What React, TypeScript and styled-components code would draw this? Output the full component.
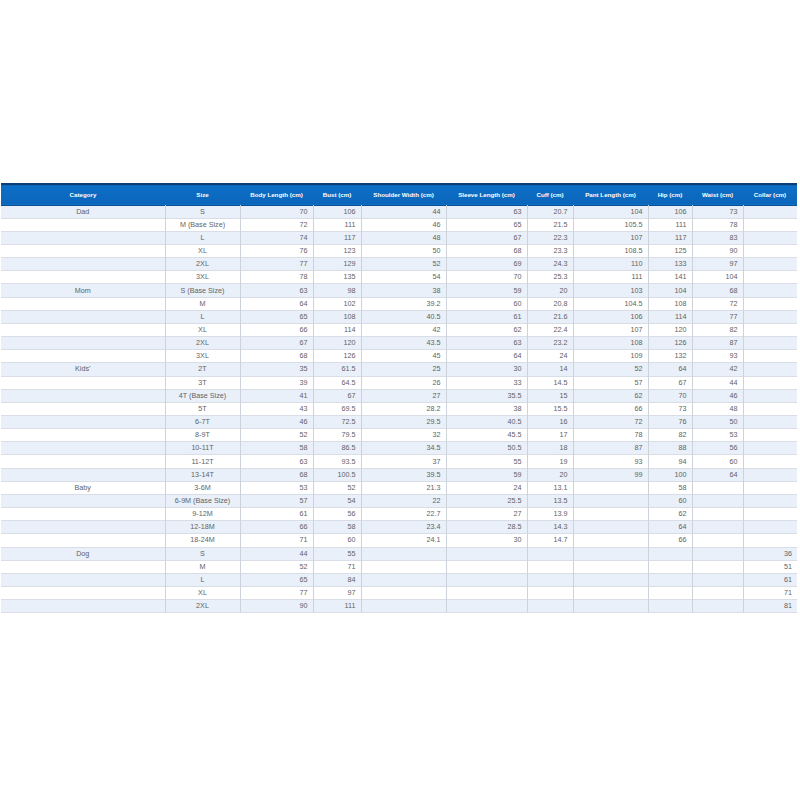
import React from "react";
import styled, { createGlobalStyle } from "styled-components";

const GlobalStyle = createGlobalStyle`
  html, body { margin: 0; padding: 0; background: #ffffff; }
  body { font-family: "Liberation Sans", Arial, sans-serif; }
`;

const Page = styled.div`
  width: 800px;
  height: 800px;
  box-sizing: border-box;
  padding: 183px 3px 0 1px;
`;

const Table = styled.table`
  width: 796px;
  border-collapse: collapse;
  table-layout: fixed;
  font-family: "Liberation Sans", Arial, sans-serif;
`;

const HeadRow = styled.tr`
  height: 21px;
  background: linear-gradient(#0d6fc6, #0a66bb);
  border-top: 2px solid #0d3f75;
  border-bottom: 1px solid #0b4f92;
`;

const HeadCell = styled.th`
  color: #ffffff;
  font-size: 6.2px;
  font-weight: bold;
  text-align: center;
  padding: 0 2px;
  white-space: nowrap;
  overflow: hidden;
`;

const Row = styled.tr<{ $striped: boolean }>`
  height: 13.16px;
  background: ${(p) => (p.$striped ? "#e9f0f9" : "#ffffff")};
  border-bottom: 1px solid #d9dee6;
`;

const Cell = styled.td<{ $align: "center" | "right"; $first?: boolean }>`
  font-size: 7.2px;
  color: #5f6266;
  text-align: ${(p) => p.$align};
  padding: 0 ${(p) => (p.$align === "right" ? "5px" : "2px")} 0 2px;
  border-left: ${(p) => (p.$first ? "none" : "1px solid #cdd3db")};
  white-space: nowrap;
  overflow: hidden;
  line-height: 12px;
  vertical-align: middle;
`;

const widths = [164, 75, 73, 48, 85, 81, 46, 75, 44, 51, 54];
const headers = [
  "Category",
  "Size",
  "Body Length (cm)",
  "Bust (cm)",
  "Shoulder Width (cm)",
  "Sleeve Length (cm)",
  "Cuff (cm)",
  "Pant Length (cm)",
  "Hip (cm)",
  "Waist (cm)",
  "Collar (cm)",
];

type R = string[];
const rows: R[] = [
  ["Dad", "S", "70", "106", "44", "63", "20.7", "104", "106", "73", ""],
  ["", "M (Base Size)", "72", "111", "46", "65", "21.5", "105.5", "111", "78", ""],
  ["", "L", "74", "117", "48", "67", "22.3", "107", "117", "83", ""],
  ["", "XL", "76", "123", "50", "68", "23.3", "108.5", "125", "90", ""],
  ["", "2XL", "77", "129", "52", "69", "24.3", "110", "133", "97", ""],
  ["", "3XL", "78", "135", "54", "70", "25.3", "111", "141", "104", ""],
  ["Mom", "S (Base Size)", "63", "98", "38", "59", "20", "103", "104", "68", ""],
  ["", "M", "64", "102", "39.2", "60", "20.8", "104.5", "108", "72", ""],
  ["", "L", "65", "108", "40.5", "61", "21.6", "106", "114", "77", ""],
  ["", "XL", "66", "114", "42", "62", "22.4", "107", "120", "82", ""],
  ["", "2XL", "67", "120", "43.5", "63", "23.2", "108", "126", "87", ""],
  ["", "3XL", "68", "126", "45", "64", "24", "109", "132", "93", ""],
  ["Kids'", "2T", "35", "61.5", "25", "30", "14", "52", "64", "42", ""],
  ["", "3T", "39", "64.5", "26", "33", "14.5", "57", "67", "44", ""],
  ["", "4T (Base Size)", "41", "67", "27", "35.5", "15", "62", "70", "46", ""],
  ["", "5T", "43", "69.5", "28.2", "38", "15.5", "66", "73", "48", ""],
  ["", "6-7T", "46", "72.5", "29.5", "40.5", "16", "72", "76", "50", ""],
  ["", "8-9T", "52", "79.5", "32", "45.5", "17", "78", "82", "53", ""],
  ["", "10-11T", "58", "86.5", "34.5", "50.5", "18", "87", "88", "56", ""],
  ["", "11-12T", "63", "93.5", "37", "55", "19", "93", "94", "60", ""],
  ["", "13-14T", "68", "100.5", "39.5", "59", "20", "99", "100", "64", ""],
  ["Baby", "3-6M", "53", "52", "21.3", "24", "13.1", "", "58", "", ""],
  ["", "6-9M (Base Size)", "57", "54", "22", "25.5", "13.5", "", "60", "", ""],
  ["", "9-12M", "61", "56", "22.7", "27", "13.9", "", "62", "", ""],
  ["", "12-18M", "66", "58", "23.4", "28.5", "14.3", "", "64", "", ""],
  ["", "18-24M", "71", "60", "24.1", "30", "14.7", "", "66", "", ""],
  ["Dog", "S", "44", "55", "", "", "", "", "", "", "36"],
  ["", "M", "52", "71", "", "", "", "", "", "", "51"],
  ["", "L", "65", "84", "", "", "", "", "", "", "61"],
  ["", "XL", "77", "97", "", "", "", "", "", "", "71"],
  ["", "2XL", "90", "111", "", "", "", "", "", "", "81"],
];

export default function App() {
  return (
    <>
      <GlobalStyle />
      <Page>
        <Table>
          <colgroup>
            {widths.map((w, i) => (
              <col key={i} style={{ width: `${w}px` }} />
            ))}
          </colgroup>
          <thead>
            <HeadRow>
              {headers.map((h) => (
                <HeadCell key={h}>{h}</HeadCell>
              ))}
            </HeadRow>
          </thead>
          <tbody>
            {rows.map((r, i) => (
              <Row key={i} $striped={i % 2 === 0}>
                {r.map((c, j) => (
                  <Cell key={j} $align={j < 2 ? "center" : "right"} $first={j === 0}>
                    {c}
                  </Cell>
                ))}
              </Row>
            ))}
          </tbody>
        </Table>
      </Page>
    </>
  );
}
